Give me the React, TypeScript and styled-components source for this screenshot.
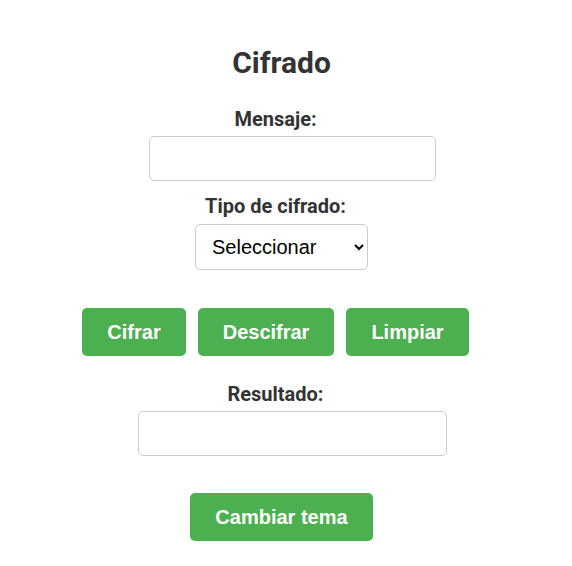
import styled, { createGlobalStyle } from 'styled-components';

const GlobalStyle = createGlobalStyle`
body {
  margin: 0;
  background: #ffffff;
  font-family: Roboto, "Liberation Sans", sans-serif;
  color: #333333;
}
`

const Page = styled.div`
width: 563px;
display: flex;
flex-direction: column;
align-items: center;
padding-top: 45px;
`

const Title = styled.h1`
margin: 0;
font-size: 30px;
line-height: 36px;
font-weight: 700;
color: #333333;
`

const Label = styled.label<{ $top: number }>`
display: block;
margin-top: ${p => p.$top}px;
margin-bottom: 5px;
padding-right: 12px;
font-size: 20px;
line-height: 24px;
font-weight: 700;
color: #333333;
`

const TextBox = styled.input<{ $width: number }>`
box-sizing: border-box;
width: ${p => p.$width}px;
height: 45px;
margin: 0 0 0 22px;
padding: 10px;
border: 1px solid #cccccc;
border-radius: 5px;
font-family: "Liberation Sans", Arial, sans-serif;
font-size: 18px;
background: #ffffff;
`

const Select = styled.select`
box-sizing: border-box;
width: 173px;
height: 46px;
margin-top: 1px;
padding: 0 8px 0 12px;
border: 1px solid #cccccc;
border-radius: 5px;
font-family: "Liberation Sans", Arial, sans-serif;
font-size: 20px;
color: #000000;
background: #ffffff;
`

const ButtonRow = styled.div`
display: flex;
gap: 12px;
margin-top: 38px;
padding-right: 12px;
`

const GreenButton = styled.button<{ $top?: number }>`
box-sizing: border-box;
height: 48px;
margin-top: ${p => p.$top ?? 0}px;
padding: 0 25px;
border: none;
border-radius: 5px;
background: #4caf50;
color: #ffffff;
font-family: "Liberation Sans", Arial, sans-serif;
font-size: 20px;
font-weight: 700;
cursor: pointer;
`

export default function App() {
  return (
    <>
      <GlobalStyle />
      <Page>
        <Title>Cifrado</Title>
        <Label $top={26} htmlFor="mensaje">Mensaje:</Label>
        <TextBox id="mensaje" type="text" $width={287} />
        <Label $top={13} htmlFor="tipo">Tipo de cifrado:</Label>
        <Select id="tipo" defaultValue="">
          <option value="">Seleccionar</option>
          <option value="cesar">César</option>
          <option value="vigenere">Vigenère</option>
        </Select>
        <ButtonRow>
          <GreenButton>Cifrar</GreenButton>
          <GreenButton>Descifrar</GreenButton>
          <GreenButton>Limpiar</GreenButton>
        </ButtonRow>
        <Label $top={26} htmlFor="resultado">Resultado:</Label>
        <TextBox id="resultado" type="text" readOnly $width={309} />
        <GreenButton $top={37}>Cambiar tema</GreenButton>
      </Page>
    </>
  )
}
